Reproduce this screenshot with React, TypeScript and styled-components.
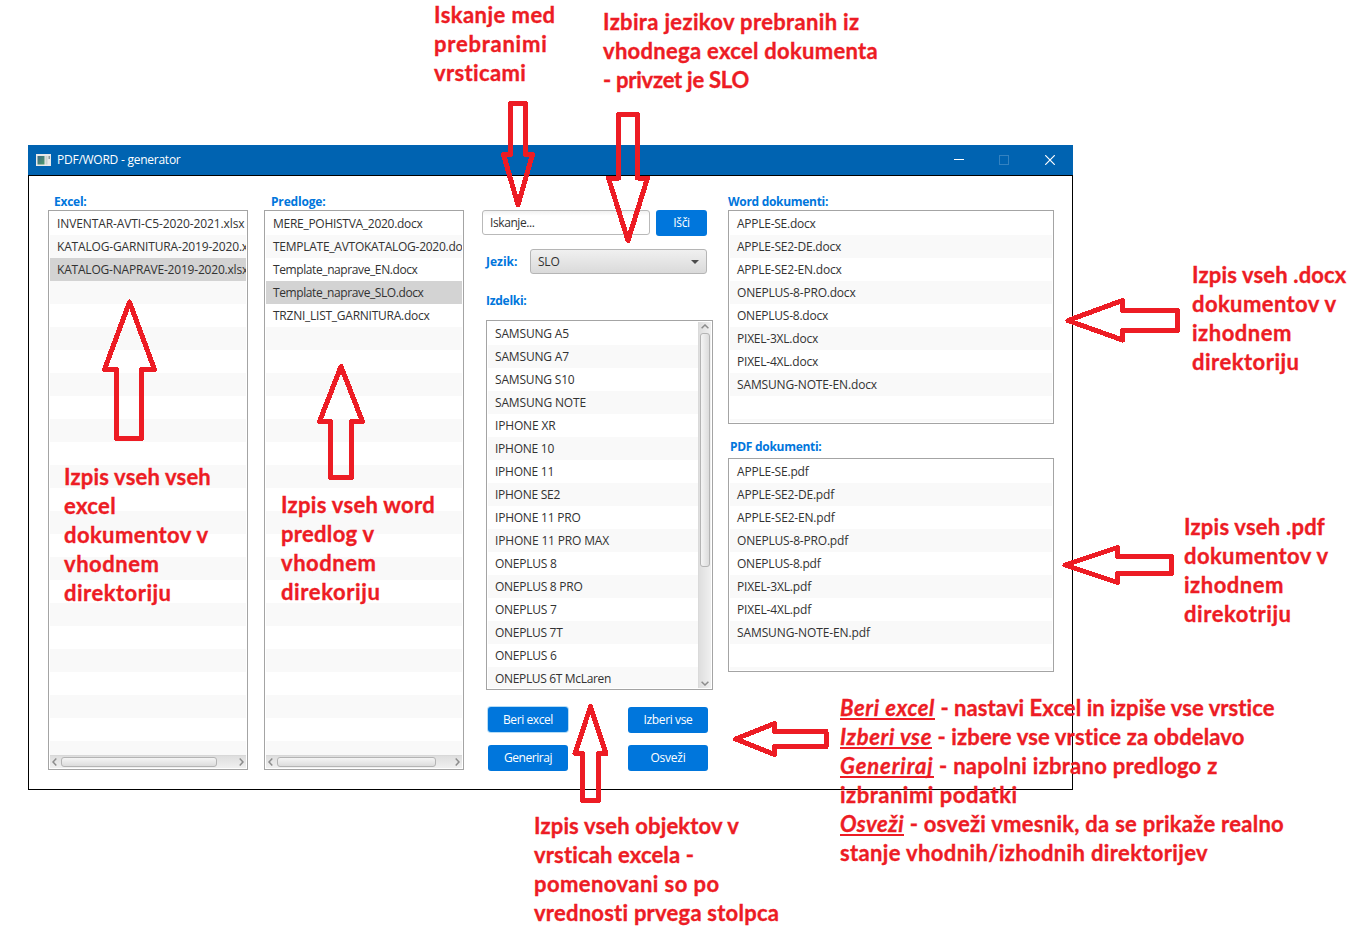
import React from 'react';
import styled, { createGlobalStyle, css } from 'styled-components';

const UI_FONT = '"Open Sans", "Noto Sans", sans-serif';
const NOTE_FONT = 'Lato, "Open Sans", sans-serif';

const GlobalStyle = createGlobalStyle`
  *, *::before, *::after { box-sizing: border-box; }
  html, body { margin: 0; padding: 0; background: #fff; }
  body { width: 1361px; height: 933px; overflow: hidden; font-family: ${UI_FONT}; }
  button { font: inherit; }
`;

/* ---------- text set to a fixed measure ---------- */

const measureCtx = document.createElement('canvas').getContext('2d')!;

const tracking = (text: string, width: number, font: string) => {
  measureCtx.font = font;
  return (width - measureCtx.measureText(text).width) / text.length;
};

const Line = styled.span`
  white-space: pre;
`;

type SetTextProps = { text: string; width: number; font: string };

const SetText = ({ text, width, font }: SetTextProps) => (
  <Line style={{ letterSpacing: `${tracking(text, width, font).toFixed(3)}px` }}>{text}</Line>
);

const ROW_TYPE = `12px ${UI_FONT}`;
const LABEL_TYPE = `bold 12px ${UI_FONT}`;
const NOTE_TYPE = `bold 22px ${NOTE_FONT}`;
const NOTE_ITALIC_TYPE = `italic bold 22px ${NOTE_FONT}`;

/* ---------- page and window ---------- */

const Page = styled.main`
  position: relative;
  width: 1361px;
  height: 933px;
  padding: 145px 0 0 28px;
  overflow: hidden;
`;

const Window = styled.section`
  width: 1045px;
  height: 645px;
  display: flex;
  flex-direction: column;
`;

const TitleBar = styled.header`
  height: 30px;
  flex: none;
  display: flex;
  align-items: center;
  padding-left: 8px;
  background: #0063b1;
  color: #fff;
  font-size: 12px;
`;

const TitleText = styled.div`
  flex: 1;
  padding-left: 6px;
  line-height: 30px;
`;

const WindowButton = styled.div<{ $dim?: boolean }>`
  width: 46px;
  height: 30px;
  display: flex;
  align-items: center;
  justify-content: center;
  color: ${(p) => (p.$dim ? '#3382c1' : '#fff')};
`;

const Body = styled.div`
  flex: 1;
  border: 1px solid #000;
  background: #fff;
  padding: 17px 0 0 19px;
  display: grid;
  grid-template-columns: 200px 200px 232px 326px;
  column-gap: 16px;
  align-items: start;
`;

const Column = styled.div`
  display: flex;
  flex-direction: column;
`;

const MiddleColumn = styled(Column)`
  padding: 17px 0 0 6px;
`;

const Label = styled.div<{ $indent?: number; $top?: number; $bottom?: number }>`
  height: 17px;
  margin-top: ${(p) => p.$top ?? 0}px;
  margin-bottom: ${(p) => p.$bottom ?? 0}px;
  padding-left: ${(p) => p.$indent ?? 0}px;
  line-height: 17px;
  font-size: 12px;
  font-weight: 700;
  color: #0076dc;
`;

/* ---------- lists ---------- */

const ListBox = styled.div<{ $height: number }>`
  display: flex;
  height: ${(p) => p.$height}px;
  border: 1px solid #a4a4a4;
  padding: 1px;
  background: #fff;
`;

const Stack = styled(ListBox)`
  flex-direction: column;
`;

const ProductList = styled(ListBox)`
  width: 227px;
  margin-top: 11px;
`;

const Rows = styled.div`
  flex: 1;
  min-width: 0;
  min-height: 0;
  overflow: hidden;
  background: repeating-linear-gradient(#fff 0 23px, #f9f9f9 23px 46px);
`;

const Row = styled.div<{ $selected?: boolean }>`
  height: 23px;
  line-height: 23px;
  padding-left: 7px;
  font-size: 12px;
  color: #323232;
  overflow: hidden;
  white-space: nowrap;
  ${(p) => p.$selected && css`background: #d3d3d3;`}
`;

const HBar = styled.div`
  height: 13px;
  flex: none;
  display: flex;
  align-items: center;
  justify-content: space-between;
  padding: 0 2px;
  border-top: 1px solid #d8d8d8;
  background: linear-gradient(#dedede, #f0f0f0);
`;

const HThumbTrack = styled.div`
  flex: 1;
  height: 10px;
  margin: 0 4px;
`;

const HThumb = styled.div<{ $width: number }>`
  width: ${(p) => p.$width}px;
  height: 10px;
  border: 1px solid #b4b4b4;
  border-radius: 3px;
  background: linear-gradient(#f5f5f5, #dcdcdc);
`;

const VBar = styled.div`
  width: 13px;
  flex: none;
  display: flex;
  flex-direction: column;
  align-items: center;
  justify-content: space-between;
  padding: 2px 1px 2px 1px;
  border-left: 1px solid #dadada;
  background: linear-gradient(90deg, #dedede, #f0f0f0);
`;

const VThumbTrack = styled.div`
  flex: 1;
  width: 10px;
  margin-top: 4px;
`;

const VThumb = styled.div`
  width: 10px;
  height: 234px;
  border: 1px solid #b4b4b4;
  border-radius: 3px;
  background: linear-gradient(90deg, #f5f5f5, #dcdcdc);
`;

const Chevron = ({ d, w, h }: { d: string; w: number; h: number }) => (
  <svg width={w} height={h} viewBox={`0 0 ${w} ${h}`} fill="none" stroke="#8c8c8c" strokeWidth="1.5">
    <path d={d} />
  </svg>
);

type Item = [text: string, width: number];

const RowList = ({ items, selected }: { items: Item[]; selected?: number }) => (
  <Rows>
    {items.map(([text, width], i) => (
      <Row key={text} $selected={i === selected}>
        <SetText text={text} width={width} font={ROW_TYPE} />
      </Row>
    ))}
  </Rows>
);

const HorizontalScroll = ({ thumb }: { thumb: number }) => (
  <HBar>
    <Chevron w={5} h={8} d="M4.3 .6 1 4l3.300 3.400" />
    <HThumbTrack>
      <HThumb $width={thumb} />
    </HThumbTrack>
    <Chevron w={5} h={8} d="M.7 .6 4 4 .7 7.400" />
  </HBar>
);

/* ---------- controls ---------- */

const SearchRow = styled.div`
  display: flex;
  align-items: flex-start;
  gap: 6px;
  margin-left: -4px;
`;

const SearchField = styled.div`
  width: 168px;
  height: 25px;
  border: 1px solid #b9b9b9;
  border-radius: 3px;
  padding-left: 7px;
  line-height: 24px;
  font-size: 12px;
  color: #323232;
  background: linear-gradient(#f2f2f2, #fff 5px);
`;

const Button = styled.button<{ $width: number; $focused?: boolean }>`
  width: ${(p) => p.$width}px;
  height: 26px;
  border: 0;
  border-radius: 3px;
  padding: 0 0 1px;
  display: flex;
  align-items: center;
  justify-content: center;
  font-size: 12px;
  color: #fff;
  background: #0076dc;
  ${(p) => p.$focused && css`box-shadow: 0 0 0 1px #b5dcf5; height: 25px;`}
`;

const LanguageRow = styled.div`
  display: flex;
  align-items: center;
  margin-top: 13px;
  height: 25px;
`;

const LanguageLabel = styled(Label)`
  width: 44px;
`;

const ComboBox = styled.div`
  width: 177px;
  height: 25px;
  display: flex;
  align-items: center;
  justify-content: space-between;
  border: 1px solid #b5b5b5;
  border-radius: 3px;
  padding: 0 7px;
  font-size: 12px;
  color: #323232;
  background: linear-gradient(#f0f0f0, #dadada);
`;

const ButtonGrid = styled.div`
  display: grid;
  grid-template-columns: 80px 80px;
  grid-auto-rows: 26px;
  column-gap: 60px;
  row-gap: 12px;
  padding: 17px 0 0 2px;
`;

/* ---------- callouts ---------- */

const Callout = styled.div<{ $x: number; $y: number }>`
  position: absolute;
  left: ${(p) => p.$x}px;
  top: ${(p) => p.$y}px;
  font-family: ${NOTE_FONT};
  font-size: 22px;
  font-weight: 700;
  line-height: 29px;
  color: #ed1c24;
  -webkit-text-stroke: 0.35px #ed1c24;
  white-space: nowrap;
`;

const CalloutLine = styled.div`
  height: 29px;
`;

const Term = styled.em`
  display: inline-block;
  height: 27px;
  line-height: 29px;
  border-bottom: 2px solid #ed1c24;
  vertical-align: top;
`;

const ArrowLayer = styled.svg`
  position: absolute;
  inset: 0;
  pointer-events: none;
`;

type Note = { x: number; y: number; lines: { term?: Item; text: Item }[] };

const plain = (x: number, y: number, lines: Item[]): Note => ({
  x,
  y,
  lines: lines.map((text) => ({ text })),
});

const notes: Note[] = [
  plain(434, 0, [['Iskanje med', 121.5], ['prebranimi', 113.5], ['vrsticami', 92.5]]),
  plain(603, 7, [['Izbira jezikov prebranih iz', 257], ['vhodnega excel dokumenta', 275], ['- privzet je SLO', 146]]),
  plain(64, 462, [['Izpis vseh vseh', 148], ['excel', 52], ['dokumentov v', 145.5], ['vhodnem', 95.5], ['direktoriju', 107.5]]),
  plain(281, 490, [['Izpis vseh word', 155], ['predlog v', 94], ['vhodnem', 95.5], ['direkoriju', 99.5]]),
  plain(1192, 260, [['Izpis vseh .docx', 155], ['dokumentov v', 145.5], ['izhodnem', 100], ['direktoriju', 107.5]]),
  plain(1184, 512, [['Izpis vseh .pdf', 141.5], ['dokumentov v', 145.5], ['izhodnem', 100], ['direkotriju', 107.5]]),
  plain(534, 811, [['Izpis vseh objektov v', 206.5], ['vrsticah excela -', 160.5], ['pomenovani so po', 185.5], ['vrednosti prvega stolpca', 245.5]]),
  {
    x: 840,
    y: 693,
    lines: [
      { term: ['Beri excel', 95], text: [' - nastavi Excel in izpiše vse vrstice', 341] },
      { term: ['Izberi vse', 92.5], text: [' - izbere vse vrstice za obdelavo', 314] },
      { term: ['Generiraj', 93.5], text: [' - napolni izbrano predlogo z', 284] },
      { text: ['izbranimi podatki', 177.5] },
      { term: ['Osveži', 64], text: [' - osveži vmesnik, da se prikaže realno', 380.5] },
      { text: ['stanje vhodnih/izhodnih direktorijev', 368.5] },
    ],
  },
];

const arrows = [
  '129.500,302 104.500,369.500 116.500,369.500 116.500,438.500 141.500,438.500 141.500,369.500 154.500,369.500',
  '341,366.500 319.500,421.500 330.500,421.500 330.500,477.500 351.500,477.500 351.500,421.500 362.500,421.500',
  '518,205 503.500,154.500 510.500,154.500 510.500,103.500 525.500,103.500 525.500,154.500 532.500,154.500',
  '628,240.500 608.500,178 618.500,178 618.500,114.500 637.500,114.500 637.500,178 647.500,178',
  '1068,320.500 1122.500,300.500 1122.500,310.500 1177.500,310.500 1177.500,330.500 1122.500,330.500 1122.500,340',
  '1065,565 1117.500,547.500 1117.500,556.500 1171.500,556.500 1171.500,573.500 1117.500,573.500 1117.500,582.500',
  '735.500,739 774.500,723.500 774.500,731.500 826,731.500 826,746.500 774.500,746.500 774.500,754.500',
  '590.500,706.500 575,753.500 582.500,753.500 582.500,800.500 598.500,800.500 598.500,753.500 606,753.500',
];

/* ---------- data ---------- */

const excelFiles: Item[] = [
  ['INVENTAR-AVTI-C5-2020-2021.xlsx', 187.5],
  ['KATALOG-GARNITURA-2019-2020.xlsx', 205.5],
  ['KATALOG-NAPRAVE-2019-2020.xlsx', 191],
];

const templates: Item[] = [
  ['MERE_POHISTVA_2020.docx', 149.5],
  ['TEMPLATE_AVTOKATALOG-2020.docx', 201],
  ['Template_naprave_EN.docx', 144.5],
  ['Template_naprave_SLO.docx', 150.5],
  ['TRZNI_LIST_GARNITURA.docx', 156.5],
];

const products: Item[] = [
  ['SAMSUNG A5', 74],
  ['SAMSUNG A7', 74],
  ['SAMSUNG S10', 79.5],
  ['SAMSUNG NOTE', 91],
  ['IPHONE XR', 60.5],
  ['IPHONE 10', 59],
  ['IPHONE 11', 59],
  ['IPHONE SE2', 65],
  ['IPHONE 11 PRO', 85.5],
  ['IPHONE 11 PRO MAX', 114],
  ['ONEPLUS 8', 61.5],
  ['ONEPLUS 8 PRO', 87.5],
  ['ONEPLUS 7', 61.5],
  ['ONEPLUS 7T', 67.5],
  ['ONEPLUS 6', 61.5],
  ['ONEPLUS 6T McLaren', 116],
];

const documents: [name: string, docx: number, pdf: number][] = [
  ['APPLE-SE', 78.5, 71.5],
  ['APPLE-SE2-DE', 104, 97],
  ['APPLE-SE2-EN', 104.5, 97.5],
  ['ONEPLUS-8-PRO', 118.500, 111],
  ['ONEPLUS-8', 91, 83.5],
  ['PIXEL-3XL', 81, 74],
  ['PIXEL-4XL', 81, 74],
  ['SAMSUNG-NOTE-EN', 140, 133],
];

const wordFiles = documents.map(([name, w]): Item => [`${name}.docx`, w]);
const pdfFiles = documents.map(([name, , w]): Item => [`${name}.pdf`, w]);

const AppIcon = () => (
  <svg width="15" height="12" viewBox="0 0 15 12">
    <defs>
      <linearGradient id="pane" x1="0" y1="0" x2="1" y2="1">
        <stop offset="0" stopColor="#3d6a86" />
        <stop offset="1" stopColor="#4f9a6b" />
      </linearGradient>
    </defs>
    <rect width="15" height="12" fill="#e9e9e9" />
    <rect x="1.500" y="2" width="7" height="8.500" fill="url(#pane)" />
    <rect x="9.500" y="2" width="2" height="8.500" fill="#c9d3d0" />
    <rect x="12.500" y="2" width="1.500" height="3" fill="#8e9a9c" />
  </svg>
);

const SearchPanel = () => (
  <MiddleColumn>
    <SearchRow>
      <SearchField>
        <SetText text="Iskanje..." width={44.5} font={ROW_TYPE} />
      </SearchField>
      <Button $width={51}>
        <SetText text="Išči" width={16.5} font={ROW_TYPE} />
      </Button>
    </SearchRow>
    <LanguageRow>
      <LanguageLabel>
        <SetText text="Jezik:" width={31.5} font={LABEL_TYPE} />
      </LanguageLabel>
      <ComboBox>
        <SetText text="SLO" width={21.5} font={ROW_TYPE} />
        <svg width="8" height="4" viewBox="0 0 8 4">
          <path d="M0 0h8L4 4z" fill="#4c4c4c" />
        </svg>
      </ComboBox>
    </LanguageRow>
    <Label $top={18}>
      <SetText text="Izdelki:" width={40.5} font={LABEL_TYPE} />
    </Label>
    <ProductList $height={370}>
      <RowList items={products} />
      <VBar>
        <Chevron w={8} h={5} d="M.6 4.300 4 1l3.400 3.300" />
        <VThumbTrack>
          <VThumb />
        </VThumbTrack>
        <Chevron w={8} h={5} d="M.6 .7 4 4 7.400 .7" />
      </VBar>
    </ProductList>
    <ButtonGrid>
      <Button $width={80} $focused>
        <SetText text="Beri excel" width={50} font={ROW_TYPE} />
      </Button>
      <Button $width={80}>
        <SetText text="Izberi vse" width={49} font={ROW_TYPE} />
      </Button>
      <Button $width={80}>
        <SetText text="Generiraj" width={48} font={ROW_TYPE} />
      </Button>
      <Button $width={80}>
        <SetText text="Osveži" width={35} font={ROW_TYPE} />
      </Button>
    </ButtonGrid>
  </MiddleColumn>
);

export default function App() {
  return (
    <Page>
      <GlobalStyle />
      <Window>
        <TitleBar>
          <AppIcon />
          <TitleText>
            <SetText text="PDF/WORD - generator" width={123.5} font={ROW_TYPE} />
          </TitleText>
          <WindowButton>
            <svg width="12" height="10" viewBox="0 0 12 10" stroke="currentColor">
              <path d="M2 4.500h10" />
            </svg>
          </WindowButton>
          <WindowButton $dim>
            <svg width="10" height="10" viewBox="0 0 10 10" fill="none" stroke="currentColor">
              <rect x=".5" y=".5" width="9" height="9" />
            </svg>
          </WindowButton>
          <WindowButton>
            <svg width="10" height="10" viewBox="0 0 10 10" stroke="currentColor" strokeWidth="1.200">
              <path d="M.2 .2l9.600 9.600M9.800 .2L.2 9.800" />
            </svg>
          </WindowButton>
        </TitleBar>

        <Body>
          <Column>
            <Label $indent={6}>
              <SetText text="Excel:" width={32.5} font={LABEL_TYPE} />
            </Label>
            <Stack $height={560}>
              <RowList items={excelFiles} selected={2} />
              <HorizontalScroll thumb={156} />
            </Stack>
          </Column>

          <Column>
            <Label $indent={7}>
              <SetText text="Predloge:" width={54.5} font={LABEL_TYPE} />
            </Label>
            <Stack $height={560}>
              <RowList items={templates} selected={3} />
              <HorizontalScroll thumb={159} />
            </Stack>
          </Column>

          <SearchPanel />

          <Column>
            <Label>
              <SetText text="Word dokumenti:" width={100} font={LABEL_TYPE} />
            </Label>
            <ListBox $height={214}>
              <RowList items={wordFiles} />
            </ListBox>
            <Label $indent={2} $top={14} $bottom={3}>
              <SetText text="PDF dokumenti:" width={91.5} font={LABEL_TYPE} />
            </Label>
            <ListBox $height={214}>
              <RowList items={pdfFiles} />
            </ListBox>
          </Column>
        </Body>
      </Window>

      <ArrowLayer
        width="1361"
        height="933"
        viewBox="0 0 1361 933"
        fill="none"
        stroke="#ed1c24"
        strokeWidth="5"
        strokeLinejoin="round"
        shapeRendering="crispEdges"
      >
        {arrows.map((points) => (
          <polygon key={points} points={points} />
        ))}
      </ArrowLayer>

      {notes.map((note) => (
        <Callout key={`${note.x}-${note.y}`} $x={note.x} $y={note.y}>
          {note.lines.map(({ term, text }) => (
            <CalloutLine key={text[0]}>
              {term && (
                <Term>
                  <SetText text={term[0]} width={term[1]} font={NOTE_ITALIC_TYPE} />
                </Term>
              )}
              <SetText text={text[0]} width={text[1]} font={NOTE_TYPE} />
            </CalloutLine>
          ))}
        </Callout>
      ))}
    </Page>
  );
}
